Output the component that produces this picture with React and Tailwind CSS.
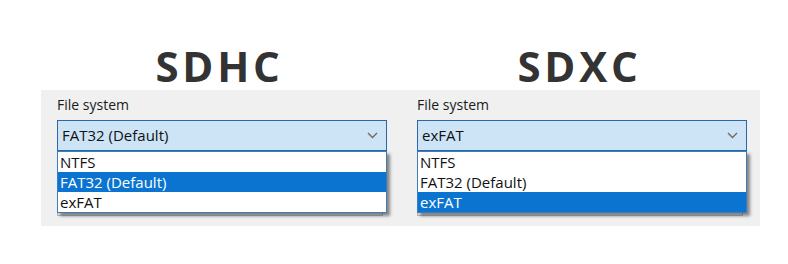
import React from 'react';

const options = ['NTFS', 'FAT32 (Default)', 'exFAT'];

function Chevron() {
  return (
    <svg width="11" height="7" viewBox="0 0 11 7" className="shrink-0">
      <path d="M1 1 L5.5 5.5 L10 1" fill="none" stroke="#6b6b6b" strokeWidth="1.4" />
    </svg>
  );
}

function FileSystemPicker({ value }) {
  return (
    <div className="w-[360px] shrink-0 flex flex-col">
      <div className="h-[18px] leading-[18px] text-[14px] text-[#1a1a1a] pl-[1px]">File system</div>
      <div className="relative mt-[6px] ml-[1px] w-[330px]">
        {/* closed combo */}
        <div className="h-[31px] border border-[#2a68a8] bg-[#cde4f7] flex items-center justify-between pl-[4px] pr-[8px] text-[15px] text-[#111]">
          <span>{value}</span>
          <Chevron />
        </div>
        {/* hint of the control hidden behind the list */}
        <div className="absolute left-0 right-[4px] top-[86px] h-[10px] border border-[#b9b9b9] bg-[#e6e6e6]"></div>
        {/* open list */}
        <div className="absolute left-0 top-[31px] w-[330px] border border-[#3b7cc2] bg-white shadow-[3px_3px_3px_rgba(0,0,0,0.45)] z-10">
          {options.map((opt) => (
            <div
              key={opt}
              className={`h-[20px] leading-[20px] pl-[2px] text-[15px] ${
                opt === value ? 'bg-[#0a74d0] text-white' : 'text-[#111]'
              }`}
            >
              {opt}
            </div>
          ))}
        </div>
      </div>
    </div>
  );
}

export default function App() {
  return (
    <div
      className="w-[788px] h-[264px] bg-white overflow-hidden pt-[45px]"
      style={{ fontFamily: '"Open Sans", "Noto Sans", sans-serif' }}
    >
      <div className="flex ml-[53px] h-[41px]">
        <div className="w-[333px] text-center text-[42px] leading-[41px] font-bold tracking-[0.09em] text-[#333333]">SDHC</div>
        <div className="w-[27px]"></div>
        <div className="w-[333px] text-center text-[42px] leading-[41px] font-bold tracking-[0.09em] text-[#333333]">SDXC</div>
      </div>
      <div className="mt-[4px] ml-[41px] w-[719px] h-[136px] bg-[#f0f0f0] pt-[6px] pl-[15px] flex">
        <FileSystemPicker value="FAT32 (Default)" />
        <FileSystemPicker value="exFAT" />
      </div>
    </div>
  );
}
